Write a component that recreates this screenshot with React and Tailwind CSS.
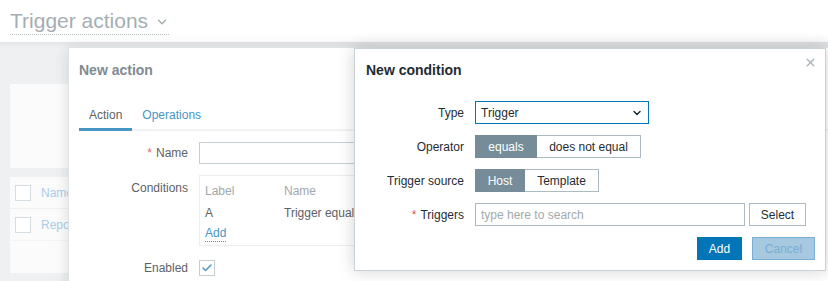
import { ChevronDown, X, Check } from 'lucide-react';

const font = { fontFamily: '"Liberation Sans", Arial, sans-serif' };

const Segmented = ({ items, active }) => (
  <div className="flex h-[23px]">
    {items.map((item, i) => (
      <div
        key={item.label}
        style={{ width: item.w }}
        className={`flex items-center justify-center text-[12px] border ${
          i === active
            ? 'bg-[#768d99] border-[#768d99] text-white'
            : 'bg-white border-[#acbbc2] text-[#1f2c33]'
        } ${i > 0 ? 'border-l-0' : ''}`}
      >
        {item.label}
      </div>
    ))}
  </div>
);

const BackgroundPage = () => (
  <div className="w-[828px] h-[281px] bg-[#eef0f1] flex flex-col">
    <div className="h-[42px] bg-white shrink-0 flex items-center pl-[10px]">
      <div className="flex items-center gap-[7px] border-b border-dotted border-[#b8c0c4] pb-[1px] mt-[1px]">
        <span className="text-[21px] leading-[24px] text-[#a5aeb3]">Trigger actions</span>
        <ChevronDown size={14} strokeWidth={2.5} className="text-[#a5aeb3] mt-[3px]" />
      </div>
    </div>
    <div className="h-[6px] bg-gradient-to-b from-[#e4e7e9] to-[#eef0f1]" />
    <div className="flex flex-col gap-[9px] pl-[10px] pt-[36px]">
      <div className="h-[84px] bg-[#fbfbfb]" />
      <div className="h-[96px] bg-[#fbfbfb] flex flex-col">
        <div className="h-[32px] flex items-center gap-[10px] pl-[5px] border-b border-[#eef0f1]">
          <div className="w-[16px] h-[16px] border border-[#d6dde0] bg-white" />
          <span className="text-[12px] text-[#a9cdea]">Name</span>
        </div>
        <div className="h-[32px] flex items-center gap-[10px] pl-[5px] border-b border-[#f3f4f5]">
          <div className="w-[16px] h-[16px] border border-[#d6dde0] bg-white" />
          <span className="text-[12px] text-[#a9cdea]">Report</span>
        </div>
      </div>
    </div>
  </div>
);

const NewActionDialog = () => (
  <div className="absolute left-[68px] top-[47px] w-[800px] h-[260px] bg-white border border-[#dfe4e7] shadow-[0_0_14px_rgba(0,0,0,0.12)]">
    <div className="h-[44px] flex items-center pl-[10px]">
      <span className="text-[14px] font-bold text-[#7f8b92]">New action</span>
    </div>
    <div className="mx-[10px] mt-[13px] flex border-b-2 border-[#f0f2f3] h-[26px]">
      <div className="px-[10px] text-[12px] text-[#5e6266] border-b-[3px] border-[#4796c4] -mb-[2px] flex items-start pt-[1px]">Action</div>
      <div className="px-[10px] text-[12px] text-[#4796c4] flex items-start pt-[1px]">Operations</div>
    </div>
    <div className="grid grid-cols-[109px_1fr] gap-x-[11px] gap-y-[11px] pl-[10px] pt-[11px] text-[12px]">
      <div className="h-[22px] flex items-center justify-end text-[#5e6266]">
        <span className="text-[#e06b6b] mr-[4px]">*</span>Name
      </div>
      <div className="h-[22px] w-[460px] border border-[#c5cfd3] bg-white" />

      <div className="flex justify-end pt-[4px] text-[#5e6266]">Conditions</div>
      <div className="h-[71px] w-[460px] border border-[#eceff1] pl-[5px] pt-[4px]">
        <div className="grid grid-cols-[79px_1fr] leading-[22px]">
          <span className="text-[#a0a8ad]">Label</span>
          <span className="text-[#a0a8ad]">Name</span>
          <span className="text-[#5e6266]">A</span>
          <span className="text-[#5e6266]">Trigger equals</span>
        </div>
        <span className="text-[#4796c4] border-b border-dotted border-[#4796c4] leading-[15px] inline-block mt-[1px]">Add</span>
      </div>

      <div className="h-[22px] flex items-center justify-end text-[#5e6266]">Enabled</div>
      <div className="h-[22px] flex items-center">
        <div className="w-[16px] h-[16px] border border-[#c5cfd3] bg-white flex items-center justify-center">
          <Check size={12} strokeWidth={3} className="text-[#4796c4]" />
        </div>
      </div>
    </div>
  </div>
);

const NewConditionDialog = () => (
  <div className="absolute left-[354px] top-[48px] w-[472px] bg-white border border-[#c9d3d7] shadow-[0_0_16px_rgba(0,0,0,0.18)]">
    <div className="h-[44px] flex items-center justify-between pl-[11px] pr-[8px]">
      <span className="text-[14px] font-bold text-[#1f2c33] -mt-[1px]">New condition</span>
      <X size={13} strokeWidth={2.5} className="text-[#a8b3b8] -mt-[18px]" />
    </div>
    <div className="grid grid-cols-[109px_1fr] gap-x-[11px] gap-y-[11px] pt-[8px] text-[12px] text-[#1f2c33]">
      <div className="h-[23px] flex items-center justify-end">Type</div>
      <div className="h-[23px] w-[174px] border border-[#0275b8] flex items-center justify-between pl-[5px] pr-[5px]">
        <span>Trigger</span>
        <ChevronDown size={12} strokeWidth={3} className="text-[#1f2c33]" />
      </div>

      <div className="h-[23px] flex items-center justify-end">Operator</div>
      <Segmented items={[{ label: 'equals', w: 62 }, { label: 'does not equal', w: 104 }]} active={0} />

      <div className="h-[23px] flex items-center justify-end">Trigger source</div>
      <Segmented items={[{ label: 'Host', w: 50 }, { label: 'Template', w: 74 }]} active={0} />

      <div className="h-[23px] flex items-center justify-end">
        <span className="text-[#e05555] mr-[4px]">*</span>Triggers
      </div>
      <div className="flex gap-[4px] h-[23px]">
        <div className="w-[270px] border border-[#acbbc2] flex items-center pl-[5px] text-[#a3a9ac]">type here to search</div>
        <div className="w-[57px] border border-[#acbbc2] flex items-center justify-center">Select</div>
      </div>
    </div>
    <div className="flex justify-end gap-[10px] pr-[10px] pt-[11px] pb-[10px] text-[12px]">
      <div className="w-[45px] h-[23px] bg-[#0275b8] text-white flex items-center justify-center">Add</div>
      <div className="w-[63px] h-[23px] bg-[#a6c9df] border border-[#7aaed2] text-[#78acd4] flex items-center justify-center">Cancel</div>
    </div>
  </div>
);

export default function App() {
  return (
    <div className="relative w-[828px] h-[281px] overflow-hidden" style={font}>
      <BackgroundPage />
      <NewActionDialog />
      <NewConditionDialog />
    </div>
  );
}
